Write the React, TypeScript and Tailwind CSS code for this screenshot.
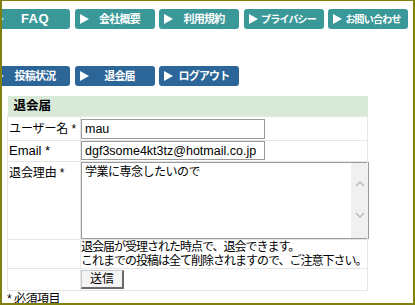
import React from "react";

const teal = "bg-[#3a9899]";
const blue = "bg-[#2c6597]";

const Arrow = () => (
  <svg width="9" height="10" viewBox="0 0 9 10" className="shrink-0">
    <polygon points="0,0 9,5 0,10" fill="white" />
  </svg>
);

const NavButton = ({
  label,
  color,
  latin,
  small,
}: {
  label: string;
  color: string;
  latin?: boolean;
  small?: boolean;
}) => (
  <div className={`${color} flex h-[20px] w-[80px] shrink-0 items-center rounded-[3px] pl-[5px] pr-[4px] text-white`}>
    <Arrow />
    <span
      className={
        latin
          ? "flex-1 whitespace-nowrap text-center text-[13px] font-bold tracking-[0.5px] [font-family:'Liberation_Sans',sans-serif]"
          : small
            ? "flex-1 whitespace-nowrap text-center text-[10px] font-bold tracking-[-0.8px]"
            : "flex-1 whitespace-nowrap text-center text-[11px] font-bold tracking-[-0.8px]"
      }
    >
      {label}
    </span>
  </div>
);

const Chevron = ({ up }: { up?: boolean }) => (
  <svg width="10" height="6" viewBox="0 0 10 6">
    <polyline
      points={up ? "1,5 5,1 9,5" : "1,1 5,5 9,1"}
      fill="none"
      stroke="#b8b8b8"
      strokeWidth="1.3"
    />
  </svg>
);

export default function App() {
  return (
    <div className="h-[305px] w-[415px] overflow-hidden border-t border-r-2 border-b-2 border-l-2 border-[#7f800f] bg-white text-black [font-family:'Liberation_Sans','Noto_Sans_CJK_JP',sans-serif]">
      {/* top nav */}
      <div className="-ml-[12px] mt-[8px] flex gap-[4.5px]">
        <NavButton label="FAQ" color={teal} latin />
        <NavButton label="会社概要" color={teal} />
        <NavButton label="利用規約" color={teal} />
        <NavButton label="プライバシー" color={teal} small />
        <NavButton label="お問い合わせ" color={teal} small />
      </div>

      {/* member nav */}
      <div className="-ml-[12px] mt-[37px] flex gap-[4.5px]">
        <NavButton label="投稿状況" color={blue} />
        <NavButton label="退会届" color={blue} />
        <NavButton label="ログアウト" color={blue} />
      </div>

      {/* form */}
      <table className="ml-[5px] mt-[10px] w-[361px] table-fixed border-collapse">
        <colgroup>
          <col className="w-[73px]" />
          <col />
        </colgroup>
        <tbody>
          <tr className="h-[20px] bg-[#d8e9d8]">
            <td colSpan={2} className="pl-[6px] text-[12.5px] font-bold leading-[20px]">
              退会届
            </td>
          </tr>
          <tr className="h-[24px]">
            <td className="border border-[#e6e6e6] pl-[1px] text-[12px] tracking-[-0.1px]">ユーザー名 *</td>
            <td className="border border-[#e6e6e6] p-0">
              <input
                readOnly
                value="mau"
                className="block h-[20px] w-[184px] border border-[#9a9a9a] px-[3px] text-[12.5px] outline-none"
              />
            </td>
          </tr>
          <tr className="h-[20px]">
            <td className="border border-[#e6e6e6] pl-[1px] text-[13px]">Email *</td>
            <td className="border border-[#e6e6e6] p-0">
              <input
                readOnly
                value="dgf3some4kt3tz@hotmail.co.jp"
                className="block h-[19px] w-[184px] border border-[#9a9a9a] px-[3px] text-[12.5px] outline-none"
              />
            </td>
          </tr>
          <tr className="h-[77px]">
            <td className="border border-[#e6e6e6] pl-[1px] pt-[2px] align-top text-[12px] tracking-[-0.1px]">
              退会理由 *
            </td>
            <td className="border border-[#e6e6e6] p-0 align-top">
              <div className="flex h-[77px] w-[288px] border border-[#9a9a9a]">
                <div className="flex-1 px-[3px] pt-[2px] text-[12px] leading-[15px] tracking-[-0.5px]">
                  学業に専念したいので
                </div>
                <div className="flex w-[17px] flex-col items-center gap-[25px] bg-[#f0f0f0] pt-[18px]">
                  <Chevron up />
                  <Chevron />
                </div>
              </div>
            </td>
          </tr>
          <tr className="h-[29px]">
            <td className="border border-[#e6e6e6]" />
            <td className="border border-[#e6e6e6] p-0 align-top text-[12px] leading-[14px] tracking-[-1px]">
              退会届が受理された時点で、退会できます。
              <br />
              これまでの投稿は全て削除されますので、ご注意下さい。
            </td>
          </tr>
          <tr className="h-[22px]">
            <td className="border border-[#e6e6e6]" />
            <td className="border border-[#e6e6e6] p-0 align-top">
              <button className="mt-[1px] flex h-[19px] w-[43px] items-center justify-center border border-[#c8c8c8] border-r-2 border-b-2 border-r-[#6a6a6a] border-b-[#6a6a6a] bg-[#f4f4f4] text-[12px]">
                送信
              </button>
            </td>
          </tr>
        </tbody>
      </table>

      <div className="ml-[5px] mt-[1px] text-[12px] leading-[14px] tracking-[-0.5px]">* 必須項目</div>
    </div>
  );
}
